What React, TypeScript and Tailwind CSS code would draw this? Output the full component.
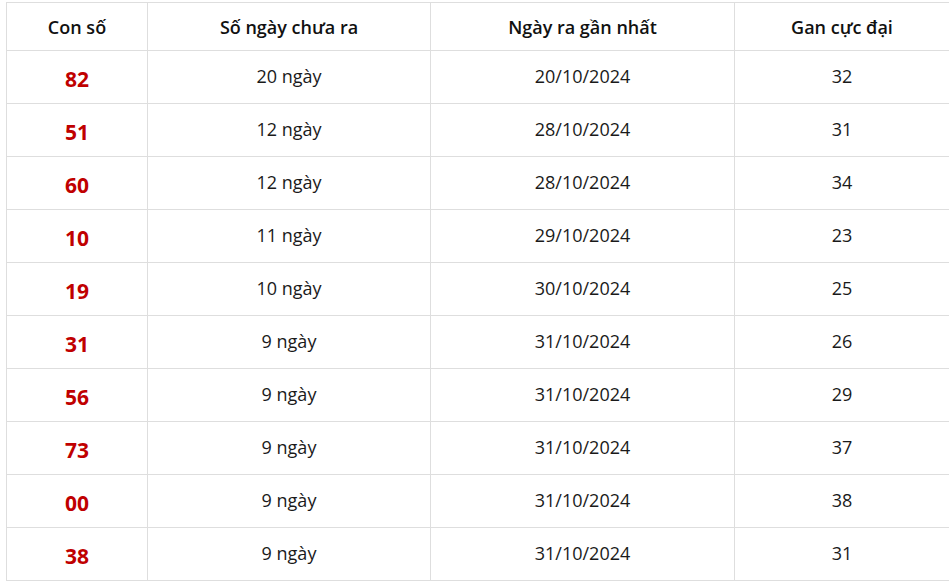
import React from "react";

const rows: [string, string, string, string][] = [
  ["82", "20 ngày", "20/10/2024", "32"],
  ["51", "12 ngày", "28/10/2024", "31"],
  ["60", "12 ngày", "28/10/2024", "34"],
  ["10", "11 ngày", "29/10/2024", "23"],
  ["19", "10 ngày", "30/10/2024", "25"],
  ["31", "9 ngày", "31/10/2024", "26"],
  ["56", "9 ngày", "31/10/2024", "29"],
  ["73", "9 ngày", "31/10/2024", "37"],
  ["00", "9 ngày", "31/10/2024", "38"],
  ["38", "9 ngày", "31/10/2024", "31"],
];

export default function App() {
  return (
    <div
      className="w-[949px] h-[586px] bg-white pt-[2px] pl-[6px]"
      style={{ fontFamily: '"Open Sans", "Noto Sans", sans-serif' }}
    >
      <table className="border-collapse w-[943px] table-fixed text-center text-[18px] text-[#1a1a1a]">
        <colgroup>
          <col className="w-[141px]" />
          <col className="w-[283px]" />
          <col className="w-[304px]" />
          <col className="w-[215px]" />
        </colgroup>
        <thead>
          <tr className="h-[48px]">
            {["Con số", "Số ngày chưa ra", "Ngày ra gần nhất", "Gan cực đại"].map((h) => (
              <th key={h} className="border border-[#dedede] font-semibold text-[#111] p-0 pt-[2px] align-middle">
                {h}
              </th>
            ))}
          </tr>
        </thead>
        <tbody>
          {rows.map((r, i) => (
            <tr key={i} className="h-[53px]">
              <td className="border border-[#dedede] p-0 pt-[5px] align-middle text-[21px] font-bold text-[#c00000]">
                {r[0]}
              </td>
              <td className="border border-[#dedede] p-0 pb-[2px] align-middle">{r[1]}</td>
              <td className="border border-[#dedede] p-0 pb-[2px] align-middle">{r[2]}</td>
              <td className="border border-[#dedede] p-0 pb-[2px] align-middle">{r[3]}</td>
            </tr>
          ))}
        </tbody>
      </table>
    </div>
  );
}
